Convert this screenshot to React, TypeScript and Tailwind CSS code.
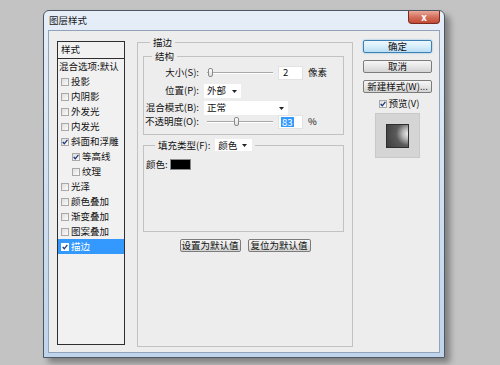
import type { ReactNode } from 'react';

function Tick({ color = '#1f3a7a' }: { color?: string }) {
  return (
    <svg width="6" height="6" viewBox="0 0 6 6">
      <path d="M0.7 3 L2.3 4.8 L5.4 0.8" fill="none" stroke={color} strokeWidth="1.3" />
    </svg>
  );
}

function Box({ on, light }: { on?: boolean; light?: boolean }) {
  return (
    <span
      className={
        'w-[8px] h-[8px] shrink-0 flex items-center justify-center border ' +
        (light ? 'border-white bg-white' : 'border-[#a8a8a8] bg-gradient-to-br from-[#dedede] to-[#fbfbfb]')
      }
    >
      {on && <Tick />}
    </span>
  );
}

function Arrow() {
  return (
    <svg width="5" height="3" viewBox="0 0 5 3" className="shrink-0">
      <path d="M0 0 H5 L2.5 3 Z" fill="#222" />
    </svg>
  );
}

function Btn({ children, w, primary }: { children: ReactNode; w: string; primary?: boolean }) {
  return (
    <div
      className={
        w +
        ' h-[13px] flex items-center justify-center rounded-[2px] border text-[9.5px] leading-none ' +
        (primary
          ? 'border-[#3c7fb1] bg-gradient-to-b from-[#eef7fd] via-[#d7eefb] to-[#b9def4] shadow-[0_0_2px_#6fb4e0]'
          : 'border-[#7c7c7c] bg-gradient-to-b from-[#f6f6f6] via-[#e6e6e6] to-[#d4d4d4]')
      }
    >
      {children}
    </div>
  );
}

function Slider({ pos }: { pos: number }) {
  return (
    <div className="relative w-[66px] h-[14px] ml-[3px]">
      <div className="absolute left-0 right-0 top-[6px] border-t border-[#a8a8a8] border-b border-b-white" />
      <div
        className="absolute top-[2px] w-[5px] h-[9px] rounded-[2px] border border-[#8a8a8a] bg-gradient-to-b from-white to-[#dcdcdc]"
        style={{ left: pos }}
      />
    </div>
  );
}

const items: { label: string; on?: boolean; sub?: boolean; sel?: boolean }[] = [
  { label: '投影' },
  { label: '内阴影' },
  { label: '外发光' },
  { label: '内发光' },
  { label: '斜面和浮雕', on: true },
  { label: '等高线', on: true, sub: true },
  { label: '纹理', sub: true },
  { label: '光泽' },
  { label: '颜色叠加' },
  { label: '渐变叠加' },
  { label: '图案叠加' },
  { label: '描边', on: true, sel: true },
];

export default function App() {
  return (
    <div className="w-[500px] h-[365px] bg-[#c3c3c3] pl-[43px] pt-[10px] overflow-hidden text-[#111] font-['Noto_Sans_CJK_SC','Noto_Sans',sans-serif]">
      <div className="w-[402px] h-[348px] rounded-t-[6px] border border-[#4e5864] bg-gradient-to-b from-[#e6eef8] via-[#d2e1f1] to-[#bfd3ea] shadow-[5px_5px_6px_rgba(0,0,0,0.35)] flex flex-col px-[4px] pb-[4px]">
        {/* title bar */}
        <div className="h-[19px] flex justify-between">
          <span className="pl-[1px] pt-[3px] text-[9.5px] leading-[12px] text-[#1a1a1a]">图层样式</span>
          <div className="w-[32px] h-[13px] rounded-b-[4px] border border-t-0 border-[#7d2a1f] bg-gradient-to-b from-[#e9a999] via-[#d4705d] to-[#c24a36] flex items-center justify-center text-white text-[10px] leading-none font-bold">
            x
          </div>
        </div>

        {/* client area */}
        <div className="flex-1 bg-[#ededed] border border-[#8ea3ba] flex items-start pl-[8px] pt-[10px] text-[9.5px] leading-none">
          {/* style list */}
          <div className="w-[68px] h-[304px] border border-[#2e2e2e] bg-[#f1f1f1] flex flex-col shrink-0">
            <div className="h-[17px] border-b border-[#2e2e2e] flex items-center pl-[3px]">样式</div>
            <div className="h-[15px] flex items-center pl-[1px] whitespace-nowrap">混合选项:默认</div>
            {items.map((it) => (
              <div
                key={it.label}
                className={
                  'h-[15px] flex items-center gap-[2px] whitespace-nowrap ' +
                  (it.sub ? 'pl-[14px] ' : 'pl-[3px] ') +
                  (it.sel ? 'bg-[#3399ff] text-white' : '')
                }
              >
                <Box on={it.on} light={it.sel} />
                <span>{it.label}</span>
              </div>
            ))}
          </div>

          {/* stroke group */}
          <fieldset className="ml-[12px] mt-[-4px] w-[216px] h-[310px] border border-[#c2c2c2] px-[5px] shrink-0 flex flex-col">
            <legend className="ml-[7px] px-[3px] leading-[10px]">描边</legend>

            <fieldset className="mt-[4px] w-[201px] h-[84px] border border-[#c2c2c2]">
              <legend className="ml-[8px] px-[3px] leading-[10px]">结构</legend>
              <div className="flex items-center h-[14px] mt-[5px]">
                <span className="w-[55px] text-right">大小(S):</span>
                <span className="w-[5px]" />
                <Slider pos={1} />
                <div className="ml-[5px] w-[25px] h-[14px] bg-white border border-[#e2e2e2] flex items-center pl-[4px]">2</div>
                <span className="ml-[5px]">像素</span>
              </div>
              <div className="flex items-center h-[14px] mt-[4px]">
                <span className="w-[55px] text-right">位置(P):</span>
                <div className="ml-[5px] w-[37px] h-[14px] bg-white flex items-center justify-between pl-[3px] pr-[4px]">
                  <span>外部</span>
                  <Arrow />
                </div>
              </div>
              <div className="flex items-center h-[14px] mt-[3px]">
                <span className="w-[55px] text-right whitespace-nowrap">混合模式(B):</span>
                <div className="ml-[5px] w-[84px] h-[14px] bg-white flex items-center justify-between pl-[3px] pr-[4px]">
                  <span>正常</span>
                  <Arrow />
                </div>
              </div>
              <div className="flex items-center h-[14px]">
                <span className="w-[55px] text-right whitespace-nowrap">不透明度(O):</span>
                <span className="w-[5px]" />
                <Slider pos={27} />
                <div className="ml-[5px] w-[25px] h-[14px] bg-white border border-[#e2e2e2] flex items-center pl-[2px]">
                  <span className="bg-[#3399ff] text-white px-[1px] leading-[10px]">83</span>
                </div>
                <span className="ml-[5px]">%</span>
              </div>
            </fieldset>

            <fieldset className="mt-[4px] w-[201px] h-[93px] border border-[#c2c2c2]">
              <legend className="ml-[11px] px-[3px] flex items-center leading-[12px]">
                <span>填充类型(F):</span>
                <div className="ml-[5px] w-[37px] h-[12px] bg-white flex items-center justify-between pl-[3px] pr-[5px]">
                  <span>颜色</span>
                  <Arrow />
                </div>
              </legend>
              <div className="flex items-center mt-[8px] pl-[2px]">
                <span>颜色:</span>
                <div className="ml-[2px] w-[21px] h-[11px] bg-black border border-[#8a8a8a]" />
              </div>
            </fieldset>

            <div className="mt-[7px] flex justify-center gap-[7px]">
              <Btn w="w-[61px]">设置为默认值</Btn>
              <Btn w="w-[63px]">复位为默认值</Btn>
            </div>
          </fieldset>

          {/* right column */}
          <div className="ml-[10px] mt-[-1px] w-[69px] flex flex-col items-center shrink-0">
            <Btn w="w-[69px]" primary>确定</Btn>
            <div className="h-[7px]" />
            <Btn w="w-[69px]">取消</Btn>
            <div className="h-[7px]" />
            <Btn w="w-[69px]">新建样式(W)...</Btn>
            <div className="mt-[5px] flex items-center gap-[2px] pl-[3px] h-[12px]">
              <Box on />
              <span>预览(V)</span>
            </div>
            <div className="mt-[3px] w-[45px] h-[45px] bg-[#d5d5d5] border border-[#c9c9c9] flex items-center justify-center">
              <div className="w-[23px] h-[24px] border border-[#2e2e2e] bg-[radial-gradient(circle_at_100%_40%,#ececec_0,#b5b5b5_22%,#5a5a5a_48%,#3d3d3d_100%)]" />
            </div>
          </div>
        </div>
      </div>
    </div>
  );
}
